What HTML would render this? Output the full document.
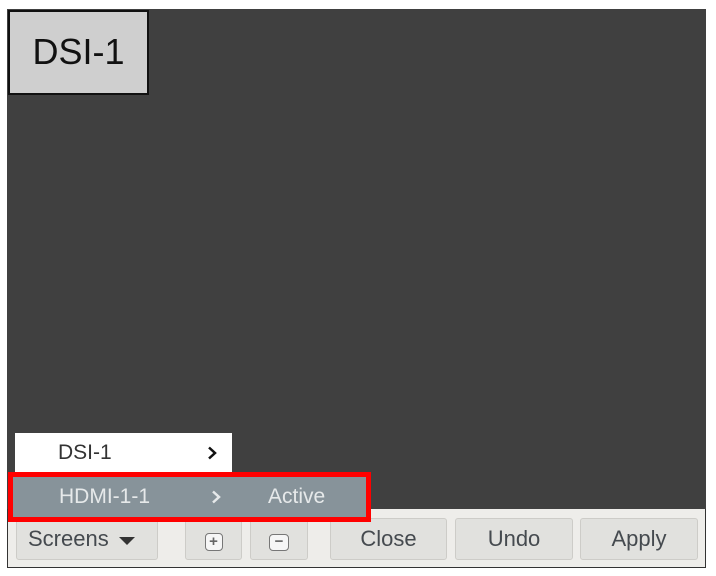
<!DOCTYPE html>
<html><head><style>
body{margin:0;width:716px;height:576px;background:#fff;position:relative;overflow:hidden;font-family:"Liberation Sans",sans-serif}
.a{position:absolute}
.btn{position:absolute;top:518px;height:42px;background:#e1e1de;border:1px solid #cdccc8;border-radius:3px;box-sizing:border-box;color:#454a4f;font-size:22px;text-align:center;line-height:40px}
</style></head><body>
<div class="a" style="left:7px;top:9px;width:699px;height:559px;border:1px solid #333;border-top:none;box-sizing:border-box;background:#eeedea"></div>
<div class="a" style="left:7px;top:9px;width:699px;height:500px;background:#404040"></div>
<div class="a" style="left:8px;top:10px;width:141px;height:85px;background:#cfcfcf;border:2px solid #111;box-sizing:border-box;font-size:36px;line-height:80px;text-align:center;color:#111">DSI-1</div>
<div class="a" style="left:15px;top:433px;width:217px;height:40px;background:#fff;font-size:21px;line-height:40px;color:#333"><span class="a" style="left:43px">DSI-1</span>
<svg class="a" style="left:192px;top:13px" width="10" height="14"><path d="M2 1.5L8 7L2 12.5" fill="none" stroke="#111" stroke-width="2.5"/></svg></div>
<div class="btn" style="left:16px;width:142px;text-align:left;padding-left:11px">Screens <svg width="16" height="10" style="margin-left:4px"><path d="M0 1H16L8 9Z" fill="#333"/></svg></div>
<div class="btn" style="left:185px;width:57px"><span style="display:inline-block;width:16px;height:16px;border:1px solid #777;border-radius:4px;margin-top:12px;font-size:15px;line-height:15px;background:#f6f6f6;font-weight:bold;color:#666">+</span></div>
<div class="btn" style="left:250px;width:58px"><span style="display:inline-block;width:18px;height:15px;border:1px solid #777;border-radius:4px;margin-top:12px;font-size:15px;line-height:14px;background:#f6f6f6;font-weight:bold;color:#666">−</span></div>
<div class="btn" style="left:330px;width:117px">Close</div>
<div class="btn" style="left:455px;width:118px">Undo</div>
<div class="btn" style="left:580px;width:118px">Apply</div>
<div class="a" style="left:8px;top:472px;width:363px;height:50px;border:5px solid #f00;box-sizing:border-box;background:#87939a;color:#e6e9ea;font-size:21px;line-height:40px">
<span class="a" style="left:46px">HDMI-1-1</span>
<svg class="a" style="left:198px;top:13px" width="10" height="14"><path d="M2 1.5L8 7L2 12.5" fill="none" stroke="#e6e9ea" stroke-width="2.5"/></svg>
<span class="a" style="left:255px">Active</span></div>
</body></html>
